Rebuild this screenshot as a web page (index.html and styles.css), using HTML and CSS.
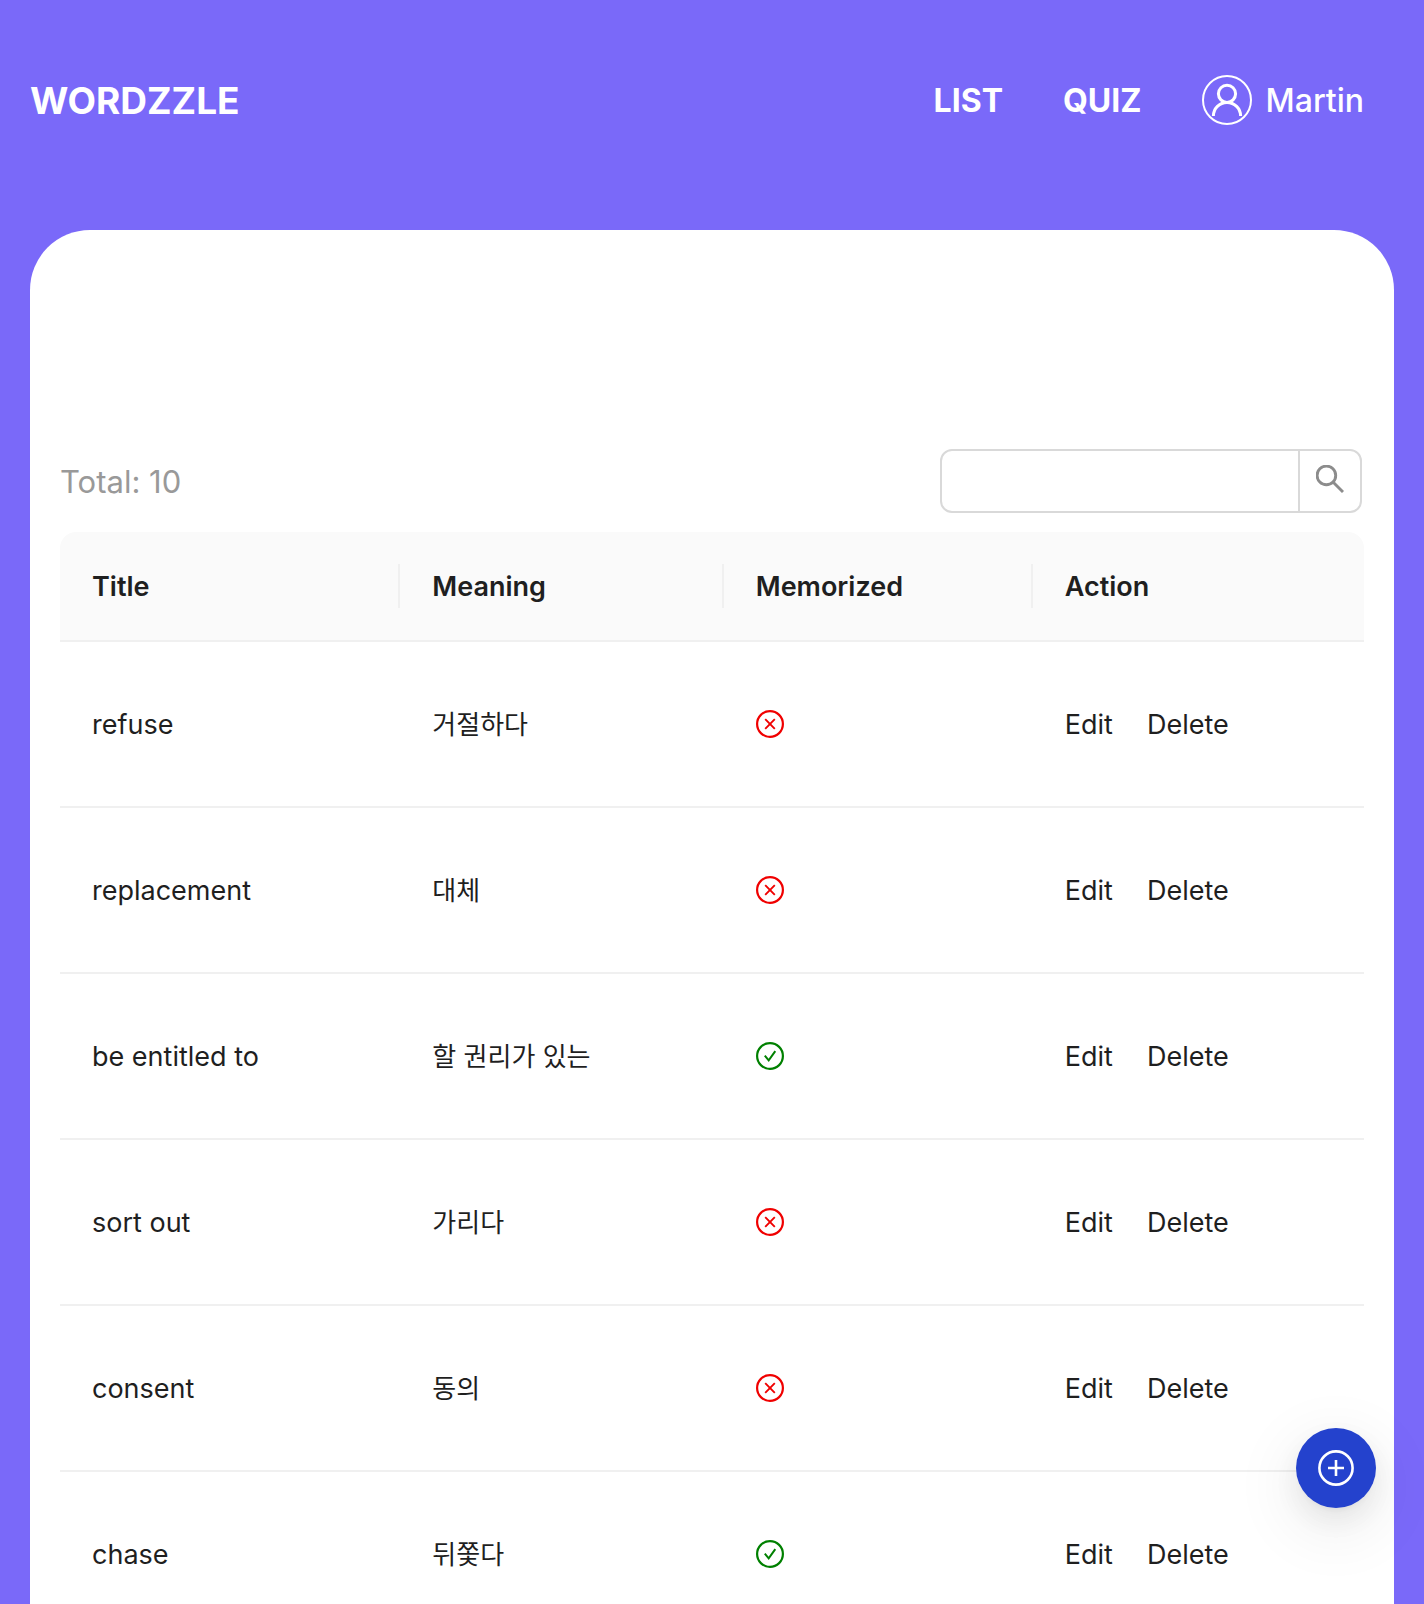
FILE: index.html
```html
<!DOCTYPE html>
<html lang="en">
<head>
<meta charset="utf-8">
<meta name="viewport" content="width=device-width, initial-scale=1">
<title>Wordzzle</title>
<link rel="stylesheet" href="styles.css">
</head>
<body>
<svg class="sprite" aria-hidden="true">
  <symbol id="icon-no" viewBox="0 0 28 28">
    <circle cx="14" cy="14" r="12.9" stroke-width="2.2"/>
    <path d="M9.2 9.2l9.6 9.6M18.8 9.2l-9.6 9.6" stroke-width="1.9"/>
  </symbol>
  <symbol id="icon-yes" viewBox="0 0 28 28">
    <circle cx="14" cy="14" r="12.9" stroke-width="2.2"/>
    <path d="M8.8 13.6l3.9 4.8 6.6-9.2" stroke-width="2"/>
  </symbol>
</svg>

<header class="header">
  <a class="brand" href="#">WORDZZLE</a>
  <nav class="nav">
    <a class="nav-link" href="#">LIST</a>
    <a class="nav-link" href="#">QUIZ</a>
    <a class="user" href="#">
      <svg class="avatar" viewBox="0 0 50 50" aria-hidden="true">
        <circle cx="25" cy="25" r="24" stroke-width="2"/>
        <circle cx="25" cy="18.8" r="8.6" stroke-width="3"/>
        <path d="M11.4 41a13.6 13.6 0 0 1 27.2 0" stroke-width="3"/>
      </svg>
      <span class="user-name">Martin</span>
    </a>
  </nav>
</header>

<main class="card">
  <div class="toolbar">
    <p class="total">Total: 10</p>
    <form class="search">
      <input class="search-input" type="text" aria-label="Search words">
      <button class="search-button" type="button" aria-label="Search">
        <svg class="search-icon" viewBox="0 0 28 28" aria-hidden="true">
          <circle cx="10.4" cy="10.4" r="9.3"/>
          <path d="M17 17l10 10"/>
        </svg>
      </button>
    </form>
  </div>

  <table class="words">
    <thead>
      <tr>
        <th class="col-title" scope="col">Title</th>
        <th class="col-meaning" scope="col">Meaning</th>
        <th class="col-memorized" scope="col">Memorized</th>
        <th scope="col">Action</th>
      </tr>
    </thead>
    <tbody>
      <tr>
        <td>refuse</td>
        <td class="meaning" lang="ko">거절하다</td>
        <td><svg class="status no" role="img" aria-label="No"><use href="#icon-no"/></svg></td>
        <td><div class="actions"><a href="#">Edit</a><a href="#">Delete</a></div></td>
      </tr>
      <tr>
        <td>replacement</td>
        <td class="meaning" lang="ko">대체</td>
        <td><svg class="status no" role="img" aria-label="No"><use href="#icon-no"/></svg></td>
        <td><div class="actions"><a href="#">Edit</a><a href="#">Delete</a></div></td>
      </tr>
      <tr>
        <td>be entitled to</td>
        <td class="meaning" lang="ko">할 권리가 있는</td>
        <td><svg class="status yes" role="img" aria-label="Yes"><use href="#icon-yes"/></svg></td>
        <td><div class="actions"><a href="#">Edit</a><a href="#">Delete</a></div></td>
      </tr>
      <tr>
        <td>sort out</td>
        <td class="meaning" lang="ko">가리다</td>
        <td><svg class="status no" role="img" aria-label="No"><use href="#icon-no"/></svg></td>
        <td><div class="actions"><a href="#">Edit</a><a href="#">Delete</a></div></td>
      </tr>
      <tr>
        <td>consent</td>
        <td class="meaning" lang="ko">동의</td>
        <td><svg class="status no" role="img" aria-label="No"><use href="#icon-no"/></svg></td>
        <td><div class="actions"><a href="#">Edit</a><a href="#">Delete</a></div></td>
      </tr>
      <tr>
        <td>chase</td>
        <td class="meaning" lang="ko">뒤쫓다</td>
        <td><svg class="status yes" role="img" aria-label="Yes"><use href="#icon-yes"/></svg></td>
        <td><div class="actions"><a href="#">Edit</a><a href="#">Delete</a></div></td>
      </tr>
    </tbody>
  </table>
</main>

<button class="add" type="button" aria-label="Add word">
  <svg class="add-icon" viewBox="0 0 36 36" aria-hidden="true">
    <circle cx="18" cy="18" r="16.6"/>
    <path d="M18 10v16M10 18h16"/>
  </svg>
</button>
</body>
</html>
```

FILE: styles.css
```css
* {
  box-sizing: border-box;
}

html {
  scrollbar-width: none;
}

body {
  margin: 0;
  background: #7a69f9;
  color: #1f1f1f;
  font-family: Inter, "Noto Sans CJK KR", sans-serif;
  font-size: 27px;
  line-height: 44px;
}

a {
  color: inherit;
  text-decoration: none;
}

svg {
  fill: none;
  stroke: currentColor;
}

.sprite {
  display: none;
}

/* Header */
.header {
  display: flex;
  align-items: center;
  justify-content: space-between;
  height: 200px;
  padding: 0 60px 0 30px;
  color: #fff;
  font-size: 32px;
}

.brand,
.nav-link,
.user-name,
.total {
  padding-top: 2px;
}

.brand {
  font-size: 37px;
  font-weight: 700;
}

.nav {
  display: flex;
  align-items: center;
  gap: 60px;
}

.nav-link {
  font-weight: 700;
}

.user {
  display: flex;
  align-items: center;
  gap: 14px;
  font-weight: 500;
}

.avatar {
  width: 50px;
  height: 50px;
}

/* Word list card */
.card {
  margin: 30px 30px 0;
  padding: 219px 30px 0;
  background: #fff;
  border-radius: 60px 60px 0 0;
}

.toolbar {
  display: flex;
  align-items: center;
  justify-content: space-between;
  padding-right: 2px;
}

.total {
  margin: 0;
  color: #999;
  font-size: 31px;
}

.search {
  display: flex;
  width: 422px;
  height: 64px;
  border: 2px solid #d9d9d9;
  border-radius: 12px;
  overflow: hidden;
}

.search-input {
  flex: 1;
  min-width: 0;
  padding: 0 22px;
  border: 0;
  outline: 0;
  background: transparent;
  font: inherit;
}

.search-button {
  width: 62px;
  padding: 0 0 4px;
  border: 0;
  border-left: 2px solid #d9d9d9;
  background: transparent;
  color: #8c8c8c;
}

.search-icon {
  display: block;
  width: 28px;
  height: 28px;
  margin: 0 auto;
  stroke-width: 2.9;
}

/* Table */
.words {
  width: 100%;
  margin-top: 19px;
  border-collapse: separate;
  border-spacing: 0;
  table-layout: fixed;
}

.words th,
.words td {
  padding: 2px 32px 0;
  border-bottom: 2px solid #f0f0f0;
  text-align: left;
}

.words th {
  height: 110px;
  background: linear-gradient(#f0f0f0, #f0f0f0) right center / 2px 44px no-repeat #fafafa;
  font-weight: 600;
}

.words th:first-child {
  border-top-left-radius: 16px;
}

.words th:last-child {
  border-top-right-radius: 16px;
  background: #fafafa;
}

.words td {
  height: 166px;
}

.col-title {
  width: 26.1%;
}

.col-meaning {
  width: 24.8%;
}

.col-memorized {
  width: 23.7%;
}

.words .meaning {
  font-size: 26px;
}

.status {
  display: block;
  width: 28px;
  height: 28px;
  margin-bottom: 2px;
}

.no {
  color: #f00000;
}

.yes {
  color: #008000;
}

.actions {
  display: flex;
  gap: 34px;
}

/* Floating add button */
.add {
  position: fixed;
  right: 48px;
  bottom: 96px;
  display: flex;
  align-items: center;
  justify-content: center;
  width: 80px;
  height: 80px;
  padding: 0;
  border: 0;
  border-radius: 50%;
  background: #2442cd;
  color: #fff;
  box-shadow:
    0 12px 32px rgba(0, 0, 0, 0.08),
    0 6px 12px -8px rgba(0, 0, 0, 0.12),
    0 18px 56px 16px rgba(0, 0, 0, 0.05);
}

.add-icon {
  width: 36px;
  height: 36px;
  stroke-width: 2.6;
}
```
